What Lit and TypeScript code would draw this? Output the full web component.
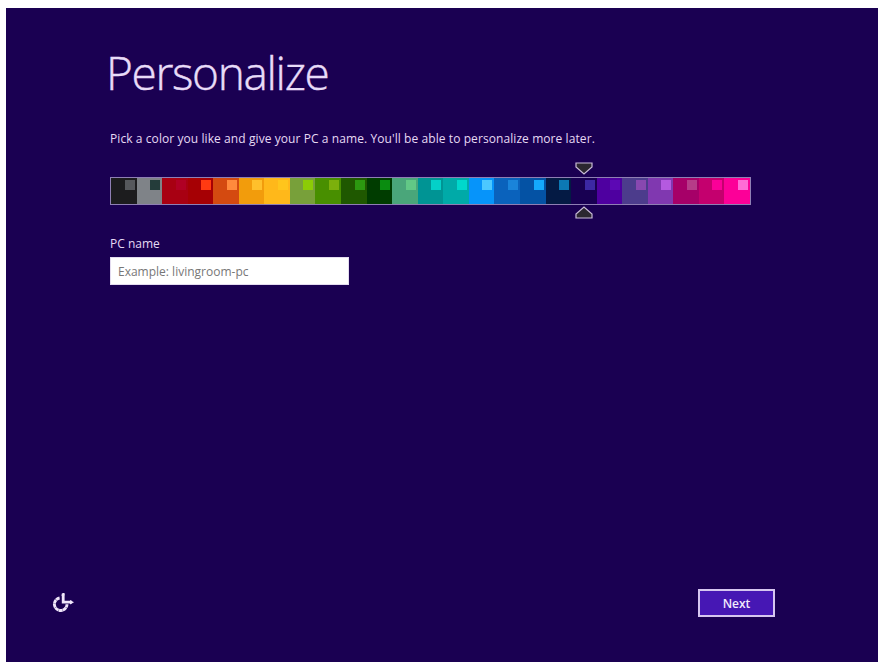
import { LitElement, css, html } from 'lit';
import { customElement, property, state } from 'lit/decorators.js';

interface Swatch {
  background: string;
  accent: string;
}

const SWATCHES: Swatch[] = [
  { background: '#1c1c1e', accent: '#56585c' },
  { background: '#7f8388', accent: '#243c3a' },
  { background: '#a80012', accent: '#b00024' },
  { background: '#a60004', accent: '#ff3a12' },
  { background: '#d44a10', accent: '#ff8a3c' },
  { background: '#f29c0c', accent: '#ffc02c' },
  { background: '#ffb81a', accent: '#ffc51c' },
  { background: '#78a03a', accent: '#8ccc06' },
  { background: '#488f00', accent: '#7cb00c' },
  { background: '#1f5800', accent: '#2c9810' },
  { background: '#003c00', accent: '#0a8c10' },
  { background: '#4aa67a', accent: '#62c886' },
  { background: '#009494', accent: '#04d0c8' },
  { background: '#00aaa8', accent: '#00d8cc' },
  { background: '#0694fa', accent: '#4cc8ff' },
  { background: '#0a62bc', accent: '#1a84da' },
  { background: '#0452a4', accent: '#14a8fc' },
  { background: '#041a44', accent: '#0c78b4' },
  { background: '#180052', accent: '#3c28a4' },
  { background: '#4e00a0', accent: '#5c08b4' },
  { background: '#4c3c8c', accent: '#8848b0' },
  { background: '#8038b0', accent: '#b45ae0' },
  { background: '#a60068', accent: '#b63c88' },
  { background: '#c4006e', accent: '#fa0098' },
  { background: '#fc0098', accent: '#ff6cd6' },
];

/**
 * Strip of color swatches with a pair of markers around the selected one.
 */
@customElement('color-strip')
export class ColorStrip extends LitElement {
  @property({ type: Number })
  selected = 18;

  static override styles = css`
    :host {
      display: block;
      width: 641px;
    }

    .markers {
      display: grid;
      grid-template-columns: repeat(25, 1fr);
      height: 15px;
      padding: 0 1px;
    }

    .marker {
      display: block;
      justify-self: center;
      width: 18px;
      height: 13px;
      overflow: visible;
      fill: #2b2730;
      stroke: #c9bcd8;
      stroke-width: 1.2;
    }

    .strip {
      display: grid;
      grid-template-columns: repeat(25, 1fr);
      box-sizing: border-box;
      height: 28px;
      border: 1px solid #8f7fb4;
    }

    .swatch {
      display: flex;
      justify-content: flex-end;
      padding: 2px 2px 0 0;
      cursor: pointer;
    }

    .accent {
      width: 10px;
      height: 10px;
    }

    .below {
      padding-top: 1px;
    }
  `;

  override render() {
    const place = `grid-column: ${this.selected + 1}`;
    return html`
      <div class="markers">
        <svg class="marker" style=${place} viewBox="0 0 18 13">
          <path d="M1 1H17V5L9 12L1 5Z" />
        </svg>
      </div>
      <div class="strip">
        ${SWATCHES.map(
          (swatch, index) => html`
            <div class="swatch" style="background: ${swatch.background}" @click=${() => this.select(index)}>
              <div class="accent" style="background: ${swatch.accent}"></div>
            </div>
          `,
        )}
      </div>
      <div class="markers below">
        <svg class="marker" style=${place} viewBox="0 0 18 13">
          <path d="M1 12H17V8L9 1L1 8Z" />
        </svg>
      </div>
    `;
  }

  private select(index: number) {
    this.selected = index;
    this.dispatchEvent(new Event('change', { bubbles: true, composed: true }));
  }
}

@customElement('app-root')
export class AppRoot extends LitElement {
  @state()
  private pcName = '';

  static override styles = css`
    :host {
      display: block;
      box-sizing: border-box;
      width: 882px;
      height: 665px;
      padding: 8px 4px 3px 6px;
      background: #ffffff;
      overflow: hidden;
      font-family: 'Open Sans', 'Noto Sans', sans-serif;
    }

    .screen {
      display: flex;
      flex-direction: column;
      box-sizing: border-box;
      height: 654px;
      padding: 31px 103px 45px 104px;
      background: #1a0052;
      color: #e6daf4;
      font-size: 12px;
      line-height: 16px;
      white-space: nowrap;
    }

    h1 {
      margin: 0 0 0 -4px;
      font-size: 46px;
      font-weight: 300;
      line-height: 66px;
      letter-spacing: -1.35px;
      color: #e8dcf8;
      -webkit-text-stroke: 0.4px #e8dcf8;
    }

    .intro {
      margin: 26px 0 0;
      letter-spacing: 0.08px;
    }

    color-strip {
      margin-top: 15px;
    }

    label {
      margin-top: 15px;
    }

    input {
      box-sizing: border-box;
      width: 239px;
      height: 28px;
      margin-top: 5px;
      padding: 0 7px;
      border: 1px solid #e4dcf0;
      border-radius: 0;
      outline: none;
      background: #ffffff;
      color: #222222;
      font: inherit;
    }

    input::placeholder {
      color: #777777;
      opacity: 1;
    }

    .footer {
      display: flex;
      align-items: center;
      justify-content: space-between;
      margin: auto 0 0 -58px;
    }

    .ease {
      display: block;
      width: 22px;
      height: 20px;
      fill: none;
      stroke: #f0e6fa;
    }

    button {
      box-sizing: border-box;
      width: 77px;
      height: 28px;
      padding: 1px 0 0;
      border: 2px solid #d6c6f0;
      background: #4617b4;
      color: #f2eafc;
      font: inherit;
      font-weight: 600;
    }
  `;

  override render() {
    return html`
      <main class="screen">
        <h1>Personalize</h1>
        <p class="intro">Pick a color you like and give your PC a name. You'll be able to personalize more later.</p>
        <color-strip></color-strip>
        <label for="pc-name">PC name</label>
        <input
          id="pc-name"
          placeholder="Example: livingroom-pc"
          .value=${this.pcName}
          @input=${this.onInput}
        />
        <div class="footer">
          <svg class="ease" viewBox="0 0 22 20" aria-label="Ease of access">
            <path d="M7.6 5A6.3 6.3 0 1 0 15 11.2" stroke-width="2.9" stroke-dasharray="3.8 .3" />
            <path d="M11.2 .4V9.2H20" stroke-width="2.8" />
            <path d="M18 7L22 9.2L18 11.4Z" fill="#f0e6fa" stroke="none" />
            <path d="M9.2 2.4L10.8 0H12.4V2.4Z" fill="#f0e6fa" stroke="none" />
          </svg>
          <button type="button">Next</button>
        </div>
      </main>
    `;
  }

  private onInput = (event: Event) => {
    this.pcName = (event.target as HTMLInputElement).value;
  };
}

declare global {
  interface HTMLElementTagNameMap {
    'app-root': AppRoot;
    'color-strip': ColorStrip;
  }
}
